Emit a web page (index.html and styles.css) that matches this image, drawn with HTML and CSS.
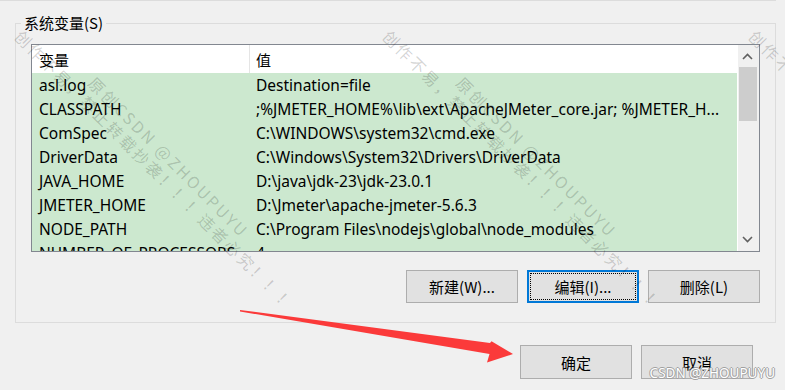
FILE: index.html
```html
<!DOCTYPE html>
<html lang="zh-CN">
<head>
  <meta charset="UTF-8">
  <title>系统变量</title>
  <link rel="stylesheet" href="styles.css">
</head>
<body>
<div class="screen">
  <div class="topline"></div>

  <fieldset class="group">
    <legend>系统变量(S)</legend>
    <div class="list">
      <div class="list-main">
        <div class="list-head">
          <div class="col-name">变量</div>
          <div class="col-value">值</div>
        </div>
        <div class="row"><div class="col-name">asl.log</div><div class="col-value">Destination=file</div></div>
        <div class="row"><div class="col-name">CLASSPATH</div><div class="col-value">;%JMETER_HOME%\lib\ext\ApacheJMeter_core.jar; %JMETER_H...</div></div>
        <div class="row"><div class="col-name">ComSpec</div><div class="col-value">C:\WINDOWS\system32\cmd.exe</div></div>
        <div class="row"><div class="col-name">DriverData</div><div class="col-value">C:\Windows\System32\Drivers\DriverData</div></div>
        <div class="row"><div class="col-name">JAVA_HOME</div><div class="col-value">D:\java\jdk-23\jdk-23.0.1</div></div>
        <div class="row"><div class="col-name">JMETER_HOME</div><div class="col-value">D:\Jmeter\apache-jmeter-5.6.3</div></div>
        <div class="row"><div class="col-name">NODE_PATH</div><div class="col-value">C:\Program Files\nodejs\global\node_modules</div></div>
        <div class="row"><div class="col-name">NUMBER_OF_PROCESSORS</div><div class="col-value">4</div></div>
      </div>
      <div class="scrollbar">
        <svg class="sb-btn" width="21" height="22" viewBox="0 0 21 22"><polyline points="5,14 9.5,9.5 14,14" /></svg>
        <div class="thumb"></div>
        <div class="track"></div>
        <svg class="sb-btn" width="21" height="22" viewBox="0 0 21 22"><polyline points="5,8 9.5,12.5 14,8" /></svg>
      </div>
    </div>
    <div class="buttons">
      <button class="btn">新建(W)...</button>
      <button class="btn focused">编辑(I)...</button>
      <button class="btn">删除(L)</button>
    </div>
  </fieldset>

  <div class="dialog-buttons">
    <button class="btn tall">确定</button>
    <button class="btn tall">取消</button>
  </div>

  <!-- overlays: screenshot watermark + annotation arrow -->
  <div class="wm wm-1"><div>原创CSDN @ZHOUPUYU</div><div>创作不易，禁止转载抄袭！！！违者必究！！！</div></div>
  <div class="wm wm-2"><div>原创CSDN @ZHOUPUYU</div><div>创作不易，禁止转载抄袭！！！违者必究！！！</div></div>
  <div class="wm wm-3"><div>原创CSDN @ZHOUPUYU</div><div>创作不易，禁止转载抄袭！！！违者必究！！！</div></div>

  <svg class="annot" width="785" height="390" viewBox="0 0 785 390">
    <polygon points="240,310 490,343 491.5,341.3 513,354 487,362.5 489.5,354 240,311.4" />
  </svg>

  <div class="csdn">CSDN @ZHOUPUYU</div>
</div>
</body>
</html>
```

FILE: styles.css
```css
html, body {
  margin: 0;
  overflow: hidden;
}
body {
  background: #f0f0f0;
  color: #000;
  font-family: "Noto Sans", "Noto Sans CJK SC", sans-serif;
  font-size: 15.5px;
}
.screen {
  position: relative;
  width: 785px;
  height: 390px;
  overflow: hidden;
}
.topline {
  width: 776px;
  height: 1px;
  background: #dcdcdc;
}
.group {
  box-sizing: border-box;
  width: 761px;
  margin: 12px 0 0 15px;
  padding: 0;
  border: 1px solid #dcdcdc;
  min-width: 0;
}
.group legend {
  margin-left: 5px;
  padding: 0 3px;
  line-height: 20px;
  font-family: "Noto Sans CJK SC", sans-serif;
  font-size: 15px;
}
.list {
  display: flex;
  width: 729px;
  height: 208px;
  box-sizing: border-box;
  margin: 11px 0 0 15px;
  border: 1px solid #828790;
  background: #cce8cf;
}
.list-main {
  flex: 1;
  overflow: hidden;
}
.list-head,
.row {
  display: grid;
  grid-template-columns: 218px 1fr;
  white-space: nowrap;
}
.list-head {
  height: 28px;
  line-height: 30px;
  background: #fff;
  font-family: "Noto Sans CJK SC", sans-serif;
  font-size: 15px;
}
.list-head .col-name {
  border-right: 1px solid #e5e5e5;
}
.row {
  height: 24px;
  line-height: 24px;
}
.col-name {
  padding-left: 7px;
  overflow: hidden;
}
.col-value {
  padding-left: 6px;
  overflow: hidden;
}
.scrollbar {
  width: 21px;
  display: flex;
  flex-direction: column;
  background: #f0f0f0;
  border-left: 1px solid #fff;
}
.sb-btn {
  display: block;
  flex: none;
}
.sb-btn polyline {
  fill: none;
  stroke: #606060;
  stroke-width: 1.6;
}
.thumb {
  height: 54px;
  margin: 0 2px 0 1px;
  background: #cdcdcd;
}
.track {
  flex: 1;
}
.buttons {
  display: flex;
  justify-content: flex-end;
  gap: 9px;
  margin: 18px 15px 0;
  padding-bottom: 19px;
}
.btn {
  box-sizing: border-box;
  width: 112px;
  height: 33px;
  padding: 0;
  background: #e1e1e1;
  border: 1px solid #adadad;
  color: #000;
  font-family: "Noto Sans CJK SC", sans-serif;
  font-size: 15px;
}
.btn.focused {
  border: 2px solid #0078d7;
  outline: 1px dotted #000;
  outline-offset: -4px;
}
.btn.tall {
  height: 34px;
}
.dialog-buttons {
  display: flex;
  justify-content: flex-end;
  gap: 9px;
  margin-top: 22px;
  padding-right: 32px;
}
.wm {
  position: absolute;
  top: 13px;
  transform-origin: 0 0;
  transform: rotate(45deg);
  color: rgba(0, 0, 0, 0.18);
  font-family: "Noto Sans CJK SC", sans-serif;
  font-size: 16px;
  line-height: 19px;
  letter-spacing: 2.5px;
  text-align: center;
  white-space: nowrap;
  pointer-events: none;
}
.wm-1 { left: 38px; }
.wm-2 { left: 406px; }
.wm-3 { left: 772px; }
.annot {
  position: absolute;
  left: 0;
  top: 0;
  pointer-events: none;
}
.annot polygon {
  fill: #fb3a3a;
}
.csdn {
  position: absolute;
  right: 10px;
  top: 363px;
  color: #fff;
  font-family: "Noto Sans", sans-serif;
  font-size: 13.5px;
  line-height: 20px;
  text-shadow: -1px 0 #a0a0a0, 1px 0 #a0a0a0, 0 -1px #a0a0a0, 0 1px #a0a0a0;
}
```
